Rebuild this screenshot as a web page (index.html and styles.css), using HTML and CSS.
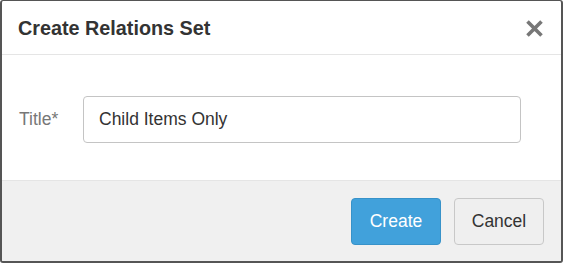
FILE: index.html
```html
<!DOCTYPE html>
<html>
<head>
<meta charset="utf-8">
<link rel="stylesheet" href="styles.css">
</head>
<body>
<div class="modal">
  <div class="modal-header">
    <h1 class="modal-title">Create Relations Set</h1>
    <button class="close" aria-label="Close">
      <svg width="19" height="19" viewBox="0 0 19 19"><path d="M2.5 2.5 L16.5 16.5 M16.5 2.5 L2.5 16.5" stroke="#777" stroke-width="3.6" stroke-linecap="butt"/></svg>
    </button>
  </div>
  <div class="modal-body">
    <label class="field-label">Title*</label>
    <div class="input">Child Items Only</div>
  </div>
  <div class="modal-footer">
    <button class="btn btn-primary">Create</button>
    <button class="btn btn-default">Cancel</button>
  </div>
</div>
</body>
</html>
```
FILE: styles.css
```css
html, body { margin: 0; padding: 0; background: #fff; }
body { font-family: "Liberation Sans", Arial, sans-serif; }
.modal {
  width: 563px;
  height: 263px;
  box-sizing: border-box;
  border: 1px solid #555;
  border-left-width: 2px;
  border-right-width: 2px;
  border-bottom-width: 2px;
  border-radius: 3px;
  display: flex;
  flex-direction: column;
  overflow: hidden;
  background: #fff;
}
.modal-header {
  height: 52px;
  border-bottom: 1px solid #e5e5e5;
  display: flex;
  align-items: center;
  justify-content: space-between;
  padding: 1px 17px 0 16px;
}
.modal-title {
  margin: 0;
  font-size: 19.8px;
  font-weight: bold;
  color: #333;
}
.close {
  background: none;
  border: 0;
  padding: 0;
  width: 19px;
  height: 19px;
  display: flex;
}
.modal-body {
  flex: 1;
  display: flex;
  align-items: center;
  padding: 4px 40px 0 17px;
  border-bottom: 1px solid #e5e5e5;
}
.field-label {
  width: 64px;
  font-size: 17.5px;
  color: #777;
}
.input {
  flex: 1;
  box-sizing: border-box;
  height: 47px;
  border: 1px solid #c4c4c4;
  border-radius: 4px;
  padding: 0 15px;
  display: flex;
  align-items: center;
  font-size: 17.5px;
  color: #333;
}
.modal-footer {
  height: 80px;
  background: #f0f0f0;
  display: flex;
  align-items: center;
  justify-content: flex-end;
  gap: 13px;
  padding: 0 17px;
  box-sizing: border-box;
}
.btn {
  width: 90px;
  height: 47px;
  border-radius: 4px;
  font-family: "Liberation Sans", Arial, sans-serif;
  font-size: 17.5px;
  padding: 0;
}
.btn-primary {
  background: #41a1db;
  border: 1px solid #3792c9;
  color: #fff;
}
.btn-default {
  background: #efefef;
  border: 1px solid #c8c8c8;
  color: #333;
}
```
